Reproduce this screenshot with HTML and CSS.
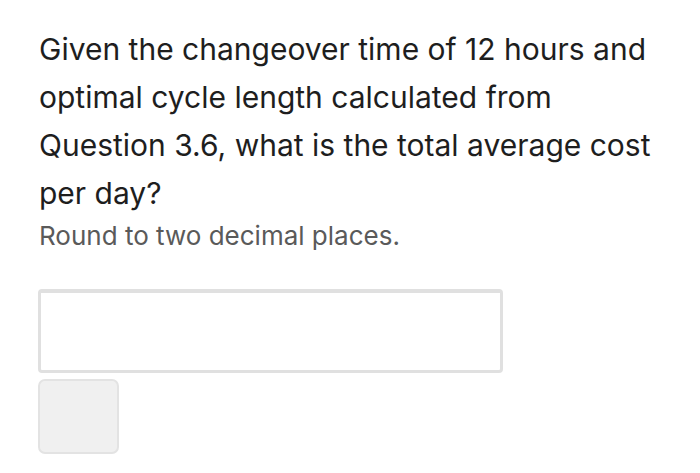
FILE: index.html
```html
<!DOCTYPE html>
<html>
<head>
<meta charset="utf-8">
<link rel="stylesheet" href="styles.css">
</head>
<body>
<div class="question">
  <p class="prompt">Given the changeover time of 12 hours and optimal cycle length calculated from Question 3.6, what is the total average cost per day?</p>
  <p class="hint">Round to two decimal places.</p>
  <div class="answer"></div>
  <div class="submit"></div>
</div>
</body>
</html>
```
FILE: styles.css
```css
html, body {
  margin: 0;
  padding: 0;
  background: #fff;
}
.question {
  padding: 25px 30px 0 39px;
  font-family: Inter, "Noto Sans", sans-serif;
  display: flex;
  flex-direction: column;
  align-items: flex-start;
}
.prompt {
  margin: 0;
  font-size: 30px;
  line-height: 48px;
  color: #1e1e1e;
  width: 618px;
}
.hint {
  margin: 4px 0 0;
  font-size: 26px;
  line-height: 30px;
  color: #5a5a5a;
}
.answer {
  margin-top: 38px;
  width: 459px;
  height: 77px;
  border: 3px solid #e0e0e0;
  border-top-width: 4px;
  border-radius: 4px;
  margin-left: -1px;
}
.submit {
  margin-top: 6px;
  margin-left: -1px;
  width: 77px;
  height: 71px;
  background: #f0f0f0;
  border: 2px solid #e3e3e3;
  border-radius: 7px;
}
```
